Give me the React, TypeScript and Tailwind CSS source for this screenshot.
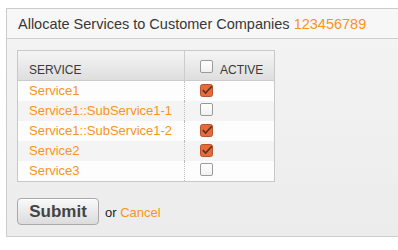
import React from "react";

type Row = { name: string; active: boolean };

const rows: Row[] = [
  { name: "Service1", active: true },
  { name: "Service1::SubService1-1", active: false },
  { name: "Service1::SubService1-2", active: true },
  { name: "Service2", active: true },
  { name: "Service3", active: false },
];

const Box = ({ checked }: { checked: boolean }) =>
  checked ? (
    <svg width="14" height="14" viewBox="0 0 14 14" className="block">
      <rect x="0.5" y="1.5" width="12" height="12" rx="2" fill="#e8693a" stroke="#b9532c" />
      <path d="M2.8 7.2 L5.6 10 L11.8 3.2" fill="none" stroke="#5b3426" strokeWidth="1.7" />
    </svg>
  ) : (
    <span className="block w-[13px] h-[13px] rounded-[2px] border border-[#9a9a9a] bg-gradient-to-b from-white to-[#f1f1f1]" />
  );

export default function App() {
  return (
    <div className="w-full h-[250px] overflow-hidden bg-white font-['Liberation_Sans',Arial,sans-serif]">
      <div className="ml-[6px] mt-[8px] w-[420px] border border-[#cccccc]">
        <div className="h-[30px] bg-[#f7f7f7] border-b border-[#cfcfcf] pl-[11px] text-[14.5px] leading-[30px] text-[#383838]">
          Allocate Services to Customer Companies <span className="text-[#f7941d]">123456789</span>
        </div>
        <div className="bg-gradient-to-b from-[#f3f3f3] to-[#ececec] pl-[10px] pt-[11px] pb-[11px]">
          <div className="w-[258px] border border-[#c8c8c8] bg-white">
            <div className="flex h-[30px] border-b border-[#cccccc] bg-gradient-to-b from-[#f5f5f5] to-[#dedede] text-[12px] leading-[14px] text-[#3a3a3a]">
              <div className="w-[167px] border-r border-[#cccccc] pl-[11px] pt-[12px]">SERVICE</div>
              <div className="flex-1 flex pl-[15px] pt-[9px]">
                <Box checked={false} />
                <span className="ml-[7px] mt-[3px]">ACTIVE</span>
              </div>
            </div>
            {rows.map((r, i) => (
              <div key={r.name} className={`flex h-[20px] ${i % 2 === 1 ? "bg-[#f4f4f4]" : "bg-[#fdfdfd]"}`}>
                <div className="w-[167px] border-r border-dotted border-[#bdbdbd] pl-[11px] text-[13px] leading-[20px] text-[#f7941d]">
                  {r.name}
                </div>
                <div className="flex-1 pl-[15px] pt-[2px]">
                  <Box checked={r.active} />
                </div>
              </div>
            ))}
          </div>
          <div className="flex items-center mt-[16px]">
            <button className="w-[82px] h-[27px] rounded-[4px] border border-[#a9a9a9] bg-gradient-to-b from-[#f9f9f9] to-[#dcdcdc] text-[17px] font-bold text-[#444444] shadow-[inset_0_1px_0_#ffffff]">
              Submit
            </button>
            <span className="ml-[6px] mt-[3px] text-[13px] text-[#222222]">
              or <span className="text-[#f7941d]">Cancel</span>
            </span>
          </div>
        </div>
      </div>
    </div>
  );
}
